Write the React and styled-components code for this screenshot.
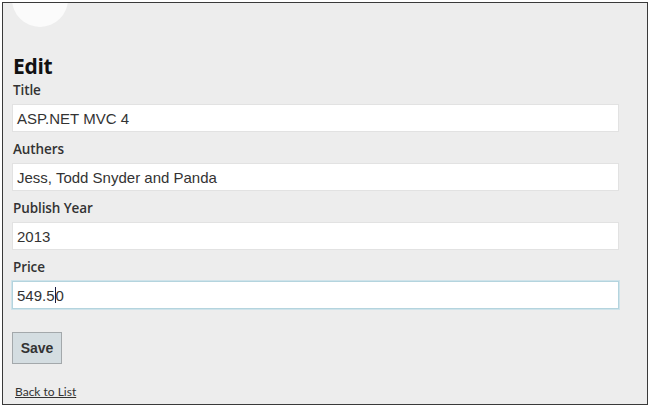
import React from 'react'
import styled, { createGlobalStyle } from 'styled-components'

const GlobalStyle = createGlobalStyle`
  html, body {
    margin: 0;
    padding: 0;
    background: #ffffff;
  }
`

const fields = [
  { label: 'Title', value: 'ASP.NET MVC 4' },
  { label: 'Authers', value: 'Jess, Todd Snyder and Panda' },
  { label: 'Publish Year', value: '2013' },
  { label: 'Price', value: '549.50', caret: 5, focused: true },
]

export default function App() {
  return (
    <>
      <GlobalStyle />
      <Frame>
        <Logo />
        <Heading>Edit</Heading>
        <Form>
          {fields.map((f) => (
            <Field key={f.label}>
              <Label>{f.label}</Label>
              <TextBox $focused={f.focused}>
                {f.caret != null ? (
                  <>
                    {f.value.slice(0, f.caret)}
                    <Caret />
                    {f.value.slice(f.caret)}
                  </>
                ) : (
                  f.value
                )}
              </TextBox>
            </Field>
          ))}
        </Form>
        <SaveButton>Save</SaveButton>
        <BackLink href="#">Back to List</BackLink>
      </Frame>
    </>
  )
}

const Frame = styled.div`
  box-sizing: border-box;
  margin: 2px 0 0 2px;
  width: 646px;
  height: 403px;
  border: 1px solid #3a3a3a;
  background: #ededed;
  padding: 0 0 0 9px;
  overflow: hidden;
  display: flex;
  flex-direction: column;
  align-items: flex-start;
  font-family: 'Open Sans', Lato, sans-serif;
  color: #2b2b2b;
`

const Logo = styled.div`
  width: 56px;
  height: 56px;
  margin: -32px 0 0 0;
  border-radius: 50%;
  background: #fbfbfb;
`

const Heading = styled.h2`
  margin: 25px 0 0 1px;
  font-family: 'Open Sans', sans-serif;
  font-size: 21px;
  line-height: 28px;
  font-weight: 700;
  color: #111;
  letter-spacing: -0.3px;
`

const Form = styled.div`
  display: flex;
  flex-direction: column;
  gap: 7px;
  width: 607px;
`

const Field = styled.div`
  display: flex;
  flex-direction: column;
  gap: 4px;
`

const Label = styled.label`
  display: block;
  margin-left: 1px;
  font-size: 13.5px;
  line-height: 20px;
  font-weight: 600;
  color: #333;
  letter-spacing: -0.1px;
`

const TextBox = styled.div`
  box-sizing: border-box;
  height: 28px;
  display: flex;
  align-items: center;
  padding: 0 4px;
  background: #fff;
  border: 1px solid ${(p) => (p.$focused ? '#b4d4de' : '#e2e2e2')};
  box-shadow: ${(p) => (p.$focused ? '0 0 0 1px #cfe3ea' : 'none')};
  font-family: 'Liberation Sans', Arial, sans-serif;
  font-size: 15px;
  color: #333;
`

const Caret = styled.span`
  display: inline-block;
  width: 1px;
  height: 16px;
  background: #1a1a40;
`

const SaveButton = styled.button`
  margin-top: 23px;
  width: 50px;
  height: 32px;
  padding: 0;
  background: #d4dde1;
  border: 1px solid #a3a8ab;
  font-family: 'Liberation Sans', Arial, sans-serif;
  font-weight: 700;
  font-size: 14px;
  color: #333;
`

const BackLink = styled.a`
  margin: 20px 0 0 3px;
  font-family: Lato, sans-serif;
  font-size: 12px;
  line-height: 16px;
  color: #333;
  text-decoration: underline;
`
